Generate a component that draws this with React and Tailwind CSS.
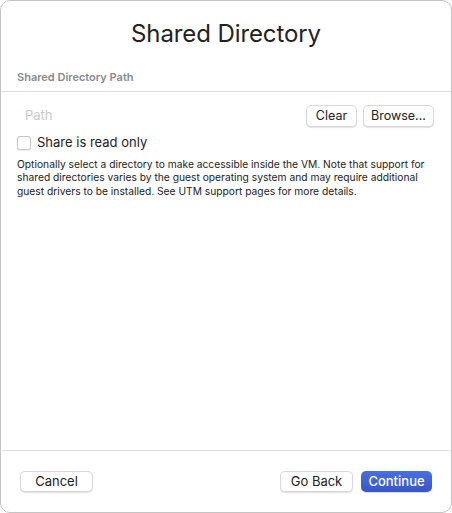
export default function App() {
  return (
    <div
      className="w-[452px] h-[513px] bg-white border border-[#c4c4c4] rounded-[10px] flex flex-col overflow-hidden text-[#222]"
      style={{ fontFamily: 'Inter, "Liberation Sans", sans-serif' }}
    >
      <div className="h-[63px] flex items-end justify-center pb-[18px]">
        <h1 className="text-[24px] leading-none tracking-[-0.1px] text-[#222]">Shared Directory</h1>
      </div>
      <div className="px-[16px] h-[27px] flex items-center">
        <span className="text-[11px] font-semibold text-[#8a8a8a]">Shared Directory Path</span>
      </div>
      <div className="h-px bg-[#dcdcdc]" />
      <div className="px-[16px] pt-[13px] flex-1">
        <div className="flex items-center">
          <span className="ml-[8px] text-[13px] text-[#c8c8c8]">Path</span>
          <div className="ml-auto flex gap-[6px] mr-[1px]">
            <button className="w-[51px] h-[22px] rounded-[5px] bg-white border border-[#d8d8d8] shadow-[0_1px_1px_rgba(0,0,0,0.12)] text-[12.5px] text-[#222] leading-none">
              Clear
            </button>
            <button className="w-[71px] h-[22px] rounded-[5px] bg-white border border-[#d8d8d8] shadow-[0_1px_1px_rgba(0,0,0,0.12)] text-[12.5px] text-[#222] leading-none">
              Browse...
            </button>
          </div>
        </div>
        <label className="mt-[6px] flex items-center gap-[6px]">
          <span className="w-[14px] h-[14px] rounded-[3px] border border-[#c4c4c4] bg-white shadow-[0_0.5px_1px_rgba(0,0,0,0.08)]" />
          <span className="text-[13px] text-[#222]">Share is read only</span>
        </label>
        <p className="mt-[5px] text-[10.25px] leading-[13.5px] text-[#222]">
          Optionally select a directory to make accessible inside the VM. Note that support for shared directories varies by the guest operating system and may require additional guest drivers to be installed. See UTM support pages for more details.
        </p>
      </div>
      <div className="h-px bg-[#e2e2e2] mx-px" />
      <div className="h-[61px] flex items-center px-[19px]">
        <button className="w-[73px] h-[21px] rounded-[5px] bg-white border border-[#d8d8d8] shadow-[0_1px_1px_rgba(0,0,0,0.12)] text-[13px] text-[#222] leading-none">
          Cancel
        </button>
        <div className="ml-auto flex gap-[8px]">
          <button className="w-[73px] h-[21px] rounded-[5px] bg-white border border-[#d8d8d8] shadow-[0_1px_1px_rgba(0,0,0,0.12)] text-[13px] text-[#222] leading-none">
            Go Back
          </button>
          <button className="w-[71px] h-[21px] rounded-[5px] bg-gradient-to-b from-[#4a6fe0] to-[#3656c8] shadow-[0_1px_1px_rgba(0,0,0,0.15)] text-[13px] font-medium text-white leading-none">
            Continue
          </button>
        </div>
      </div>
    </div>
  );
}
